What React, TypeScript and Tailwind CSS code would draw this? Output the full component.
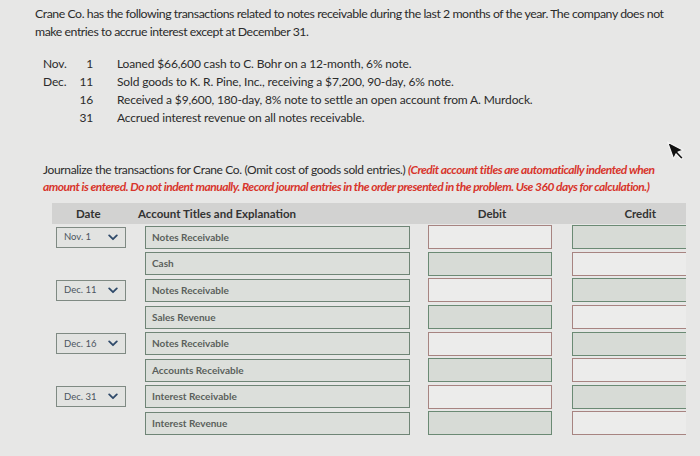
import React from "react";

const rows = [
  { date: "Nov. 1", account: "Notes Receivable", debitActive: true },
  { date: "", account: "Cash", debitActive: false },
  { date: "Dec. 11", account: "Notes Receivable", debitActive: true },
  { date: "", account: "Sales Revenue", debitActive: false },
  { date: "Dec. 16", account: "Notes Receivable", debitActive: true },
  { date: "", account: "Accounts Receivable", debitActive: false },
  { date: "Dec. 31", account: "Interest Receivable", debitActive: true },
  { date: "", account: "Interest Revenue", debitActive: false },
];

function Chevron() {
  return (
    <svg width="10" height="7" viewBox="0 0 10 7" className="shrink-0">
      <path d="M1.2 1.4 L5 5.2 L8.8 1.4" fill="none" stroke="#2f4a6a" strokeWidth="1.8" strokeLinecap="round" strokeLinejoin="round" />
    </svg>
  );
}

export default function App() {
  return (
    <div
      className="relative w-[700px] h-[456px] overflow-hidden bg-[#e7e7e6] text-[#2b2b2b]"
      style={{ fontFamily: "Lato, 'Liberation Sans', sans-serif" }}
    >
      <div className="pl-[35px] pr-[8px] pt-[5px] text-[12.3px] leading-[18px] tracking-[-0.45px]">
        Crane Co. has the following transactions related to notes receivable during the last 2 months of the year. The company does not make entries to accrue interest except at December 31.
      </div>

      <div className="mt-[14px] pl-[43px] text-[12px] leading-[18px] tracking-[-0.15px]">
        {[
          ["Nov.", "1", "Loaned $66,600 cash to C. Bohr on a 12-month, 6% note."],
          ["Dec.", "11", "Sold goods to K. R. Pine, Inc., receiving a $7,200, 90-day, 6% note."],
          ["", "16", "Received a $9,600, 180-day, 8% note to settle an open account from A. Murdock."],
          ["", "31", "Accrued interest revenue on all notes receivable."],
        ].map(([m, d, t], i) => (
          <div key={i} className="flex">
            <span className="w-[30px]">{m}</span>
            <span className="w-[20px] text-right">{d}</span>
            <span className="ml-[24px]">{t}</span>
          </div>
        ))}
      </div>

      <div className="mt-[34px] pl-[43px] text-[12px] leading-[17px] tracking-[-0.35px] whitespace-nowrap">
        <div>
          Journalize the transactions for Crane Co. (Omit cost of goods sold entries.){" "}
          <span className="text-[#d8352c] italic font-bold tracking-[-0.5px]">
            (Credit account titles are automatically indented when
          </span>
        </div>
        <div className="text-[#d8352c] italic font-bold tracking-[-0.5px]">
          amount is entered. Do not indent manually. Record journal entries in the order presented in the problem. Use 360 days for calculation.)
        </div>
      </div>

      <div className="ml-[52px] mr-[14px] mt-[8px]">
        <div className="flex h-[21px] items-center bg-[#d2d2d1] text-[11.5px] font-bold text-[#333]">
          <div className="w-[86px] pl-[24px]">Date</div>
          <div className="w-[288px]">Account Titles and Explanation</div>
          <div className="w-[144px] text-center pr-[12px]">Debit</div>
          <div className="flex-1 text-right pr-[30px]">Credit</div>
        </div>
        <div className="flex flex-col">
          {rows.map((r, i) => (
            <div key={i} className="flex h-[26.6px] items-center">
              <div className="w-[93px] pl-[4px]">
                {r.date && (
                  <div className="flex h-[21px] w-[70px] items-center justify-between border-[1.5px] border-[#7f8a83] bg-[#e2e3e1] pl-[7px] pr-[7px] text-[9.5px] text-[#4b5560]">
                    <span>{r.date}</span>
                    <Chevron />
                  </div>
                )}
              </div>
              <div className="flex h-[23px] w-[265px] items-center border-[1.5px] border-[#6f8576] bg-[#dcdfdb] pl-[6px] text-[10px] font-bold text-[#5a5f5c]">
                {r.account}
              </div>
              <div className="ml-[18px] h-[24px] w-[124px] border-[1.5px]" style={{ borderColor: r.debitActive ? "#a78481" : "#6b8a74", backgroundColor: r.debitActive ? "#ececeb" : "#d7dbd6" }} />
              <div className="ml-[20px] h-[24px] flex-1 border-[1.5px] border-r-0" style={{ borderColor: r.debitActive ? "#6b8a74" : "#a78481", backgroundColor: r.debitActive ? "#d7dbd6" : "#ececeb" }} />
            </div>
          ))}
        </div>
      </div>

      <svg className="absolute left-[666px] top-[138px]" width="18" height="26" viewBox="0 0 18 26">
        <g transform="rotate(-20 9 13)">
          <path d="M5 2 L5 20 L9 16 L12 23 L14.5 22 L11.5 15 L17 15 Z" fill="#111" stroke="#f4f4f4" strokeWidth="1.2" strokeLinejoin="round" />
        </g>
      </svg>
    </div>
  );
}
